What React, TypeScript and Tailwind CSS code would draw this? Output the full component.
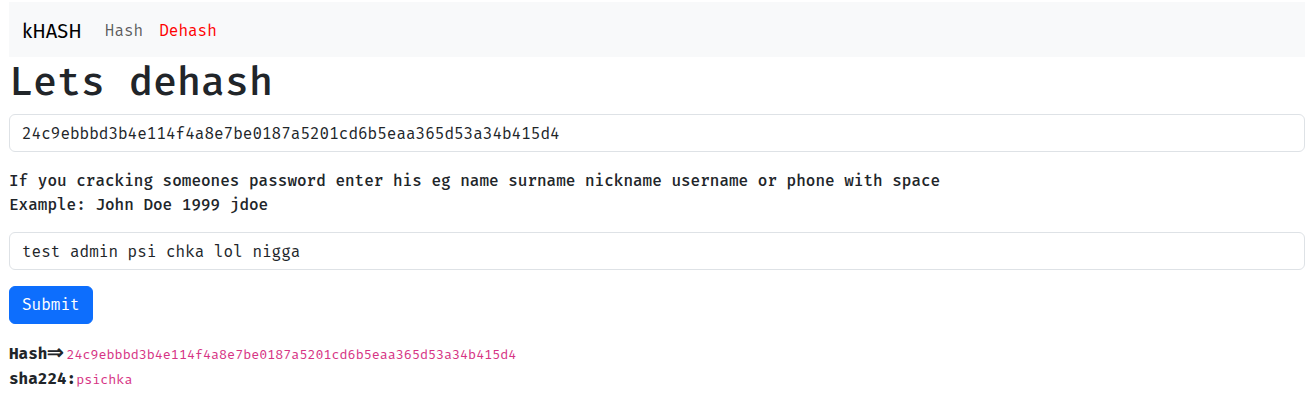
import React from "react";

const mono = "font-['Fira_Mono','DejaVu_Sans_Mono','Liberation_Mono',monospace]";
const sans = "font-['Fira_Sans','Open_Sans','Noto_Sans',sans-serif]";

const hash = "24c9ebbbd3b4e114f4a8e7be0187a5201cd6b5eaa365d53a34b415d4";

function Navbar() {
  return (
    <nav className="flex h-[55px] items-center bg-[#f8f9fa] px-[13px] pt-[2px]">
      <a className={`${sans} mr-[23px] text-[20px] text-black`}>kHASH</a>
      <div className={`${mono} flex gap-[16px] text-[16px]`}>
        <a className="text-black/65">Hash</a>
        <a className="text-[#ff0000]">Dehash</a>
      </div>
    </nav>
  );
}

export default function App() {
  return (
    <div className={`${mono} min-h-[418px] bg-white pl-[9px] pr-[7px] pt-[2px] text-[16px] leading-6 text-[#212529]`}>
      <Navbar />
      <h1 className="mb-2 mt-[1px] text-[40px] leading-[48px] font-medium">Lets dehash</h1>
      <form className="flex flex-col">
        <input
          className={`${mono} mb-4 h-[38px] w-full rounded-md border border-[#dee2e6] px-3 text-[16px] text-[#212529] outline-none`}
          defaultValue={hash}
        />
        <p className="mb-[15px] pt-[1px] font-medium">
          If you cracking someones password enter his eg name surname nickname username or phone with space
          <br />
          Example: John Doe 1999 jdoe
        </p>
        <input
          className={`${mono} mb-4 h-[38px] w-full rounded-md border border-[#dee2e6] px-3 text-[16px] text-[#212529] outline-none`}
          defaultValue="test admin psi chka lol nigga"
        />
        <div>
          <button
            type="button"
            className={`${mono} h-[38px] rounded-md border border-[#0d6efd] bg-[#0d6efd] px-3 text-[16px] text-white`}
          >
            Submit
          </button>
        </div>
      </form>
      <div className="mt-4">
        <div className="flex items-baseline">
          <b className="font-bold">
            Hash<span className={`${sans} text-[20px]`}>⇒</span>
          </b>
          <code className={`${mono} ml-[2px] text-[13.4px] text-[#d63384]`}>{hash}</code>
        </div>
        <div className="flex items-baseline">
          <b className="font-bold">sha224:</b>
          <code className={`${mono} text-[13.4px] text-[#d63384]`}>psichka</code>
        </div>
      </div>
    </div>
  );
}
